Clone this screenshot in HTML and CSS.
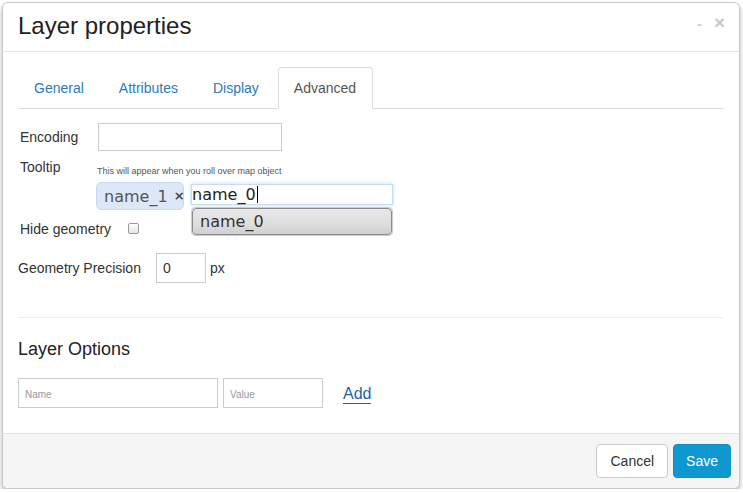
FILE: index.html
```html
<!DOCTYPE html>
<html lang="en">
  <head>
    <meta charset="UTF-8" />
    <meta name="viewport" content="width=device-width, initial-scale=1.0" />
    <title>Layer properties</title>
    <link rel="stylesheet" href="styles.css">
  </head>
  <body>
    <div class="modal">
      <div class="modal-header">
        <h3>Layer properties</h3>
        <div class="win-buttons">
          <span class="min">-</span>
          <span class="close">&times;</span>
        </div>
      </div>
      <div class="modal-body">
        <ul class="tabs">
          <li><a href="#">General</a></li>
          <li><a href="#">Attributes</a></li>
          <li><a href="#">Display</a></li>
          <li class="active"><a href="#">Advanced</a></li>
        </ul>
        <div class="pane">
          <div class="row encoding">
            <label class="lbl">Encoding</label>
            <input class="text enc-input" type="text">
          </div>
          <div class="row tooltip">
            <label class="lbl">Tooltip</label>
            <span class="help">This will appear when you roll over map object</span>
          </div>
          <div class="row tags">
            <span class="tag">name_1 <b>&times;</b></span>
            <div class="tag-input">
              <div class="typed">name_0<i class="caret"></i></div>
              <div class="suggest">
                <div class="item">name_0</div>
              </div>
            </div>
          </div>
          <div class="row hide-geom">
            <label class="lbl">Hide geometry</label>
            <span class="check"></span>
          </div>
          <div class="row precision">
            <label class="lbl">Geometry Precision</label>
            <input class="text prec-input" type="text" value="0">
            <span class="unit">px</span>
          </div>
        </div>
        <hr>
        <h4>Layer Options</h4>
        <div class="row options">
          <input class="text opt-name" type="text" placeholder="Name">
          <input class="text opt-value" type="text" placeholder="Value">
          <a class="add" href="#">Add</a>
        </div>
      </div>
      <div class="modal-footer">
        <button class="btn">Cancel</button>
        <button class="btn primary">Save</button>
      </div>
    </div>
  </body>
</html>
```

FILE: styles.css
```css
body {
  margin: 0;
  padding: 0;
  background-color: #fff;
  font-family: "Liberation Sans", Arial, sans-serif;
  font-size: 14px;
  color: #333;
}
.modal {
  margin: 2px 0 0 2px;
  width: 738px;
  box-sizing: border-box;
  border: 1px solid #c8c8c8;
  border-radius: 6px;
  background: #fff;
  box-shadow: 0 3px 5px rgba(0, 0, 0, 0.3);
  overflow: hidden;
}
.modal-header {
  position: relative;
  padding: 9px 15px 11px;
  border-bottom: 1px solid #e5e5e5;
}
.modal-header h3 {
  margin: 0;
  font-size: 24px;
  font-weight: normal;
  line-height: 28px;
  color: #222;
}
.win-buttons {
  position: absolute;
  top: 9px;
  right: 14px;
  color: #c8c8c8;
  font-weight: bold;
}
.win-buttons .min {
  font-size: 14px;
  margin-right: 8px;
}
.win-buttons .close {
  font-size: 19px;
}
.modal-body {
  padding: 15px 15px 25px;
}
.tabs {
  list-style: none;
  margin: 0;
  padding: 0;
  display: flex;
  border-bottom: 1px solid #ddd;
}
.tabs li {
  margin-bottom: -1px;
}
.tabs a {
  display: block;
  margin-right: 3px;
  padding: 10px 15px;
  line-height: 20px;
  border: 1px solid transparent;
  border-radius: 4px 4px 0 0;
  color: #2d7bb8;
  text-decoration: none;
}
.tabs .active a {
  color: #555;
  background: #fff;
  padding: 10px 16px 10px 15px;
  border-color: #ddd #ddd transparent;
}
.row {
  display: flex;
  align-items: center;
}
.lbl {
  line-height: 20px;
  color: #333;
}
.text {
  box-sizing: border-box;
  border: 1px solid #ccc;
  font-family: "Liberation Sans", Arial, sans-serif;
  font-size: 14px;
  padding: 0 6px;
  color: #333;
  outline: none;
}
.text::placeholder {
  font-size: 10px;
  color: #999;
}
.pane {
  padding-left: 2px;
}
.encoding {
  margin-top: 14px;
}
.encoding .lbl {
  width: 78px;
}
.enc-input {
  width: 184px;
  height: 28px;
}
.tooltip {
  margin-top: 6px;
  align-items: baseline;
}
.tooltip .lbl {
  width: 77px;
}
.help {
  font-size: 9px;
  color: #555;
  position: relative;
  top: 2px;
}
.tags {
  margin-top: 5px;
  padding-left: 76px;
  align-items: flex-start;
}
.tag {
  box-sizing: border-box;
  height: 28px;
  width: 88px;
  padding: 0 0 0 7px;
  border: 1px solid #c9d7f0;
  border-radius: 5px;
  background: #dee7f7;
  font-family: "DejaVu Sans", Verdana, sans-serif;
  font-size: 16px;
  line-height: 27px;
  color: #555;
  white-space: nowrap;
}
.tag b {
  font-size: 13px;
  position: relative;
  top: -2px;
  margin-left: 1px;
  color: #444;
}
.tag-input {
  position: relative;
  margin-left: 7px;
  margin-top: 2px;
}
.typed {
  box-sizing: border-box;
  width: 202px;
  height: 21px;
  border: 1px solid #c6dcf0;
  box-shadow: 0 0 4px rgba(102, 175, 233, 0.45);
  font-family: "DejaVu Sans", Verdana, sans-serif;
  font-size: 16px;
  line-height: 19px;
  color: #222;
  padding-left: 0;
}
.caret {
  display: inline-block;
  width: 1px;
  height: 17px;
  background: #000;
  vertical-align: -3px;
  margin-left: 1px;
}
.suggest {
  position: absolute;
  top: 23px;
  left: 0;
  width: 202px;
  box-sizing: border-box;
  border: 1px solid #ccc;
  border-radius: 4px;
  background: #fff;
  padding: 0;
}
.suggest .item {
  border: 1px solid #8a8a8a;
  border-radius: 4px;
  background: linear-gradient(#e8e8e8, #dedede 60%, #cfcfcf);
  font-family: "DejaVu Sans", Verdana, sans-serif;
  font-size: 16px;
  line-height: 25px;
  padding-left: 7px;
  color: #333;
}
.hide-geom {
  margin-top: 9px;
}
.hide-geom .lbl {
  width: 108px;
}
.check {
  box-sizing: border-box;
  width: 11px;
  height: 11px;
  border: 1px solid #999;
  border-radius: 2px;
  background: linear-gradient(#fdfdfd, #e6e6e6);
  position: relative;
  top: -1px;
}
.precision {
  margin-top: 14px;
  margin-left: -2px;
}
.precision .lbl {
  width: 138px;
}
.prec-input {
  width: 50px;
  height: 30px;
}
.unit {
  margin-left: 4px;
}
hr {
  margin: 34px 0 0;
  border: 0;
  border-top: 1px solid #eee;
}
h4 {
  margin: 21px 0 0;
  font-size: 18px;
  font-weight: normal;
  line-height: 20px;
  color: #222;
}
.options {
  margin-top: 19px;
}
.opt-name {
  width: 200px;
  height: 30px;
}
.opt-value {
  width: 100px;
  height: 30px;
  margin-left: 5px;
}
.add {
  margin-left: 20px;
  font-size: 16px;
  color: #23649b;
  text-decoration: none;
  border-bottom: 1px solid #23649b;
  line-height: 19px;
  position: relative;
  top: 1px;
}
.modal-footer {
  display: flex;
  justify-content: flex-end;
  padding: 10px 8px 10px;
  background: #f5f5f5;
  border-top: 1px solid #e5e5e5;
}
.btn {
  box-sizing: border-box;
  height: 34px;
  padding: 6px 13px;
  font-family: "Liberation Sans", Arial, sans-serif;
  font-size: 14px;
  line-height: 20px;
  border: 1px solid #ccc;
  border-radius: 4px;
  background: #fff;
  color: #333;
}
.btn.primary {
  margin-left: 5px;
  background: #0f97cf;
  border-color: #0f8fc4;
  color: #fff;
  padding: 6px 12px;
}
```
